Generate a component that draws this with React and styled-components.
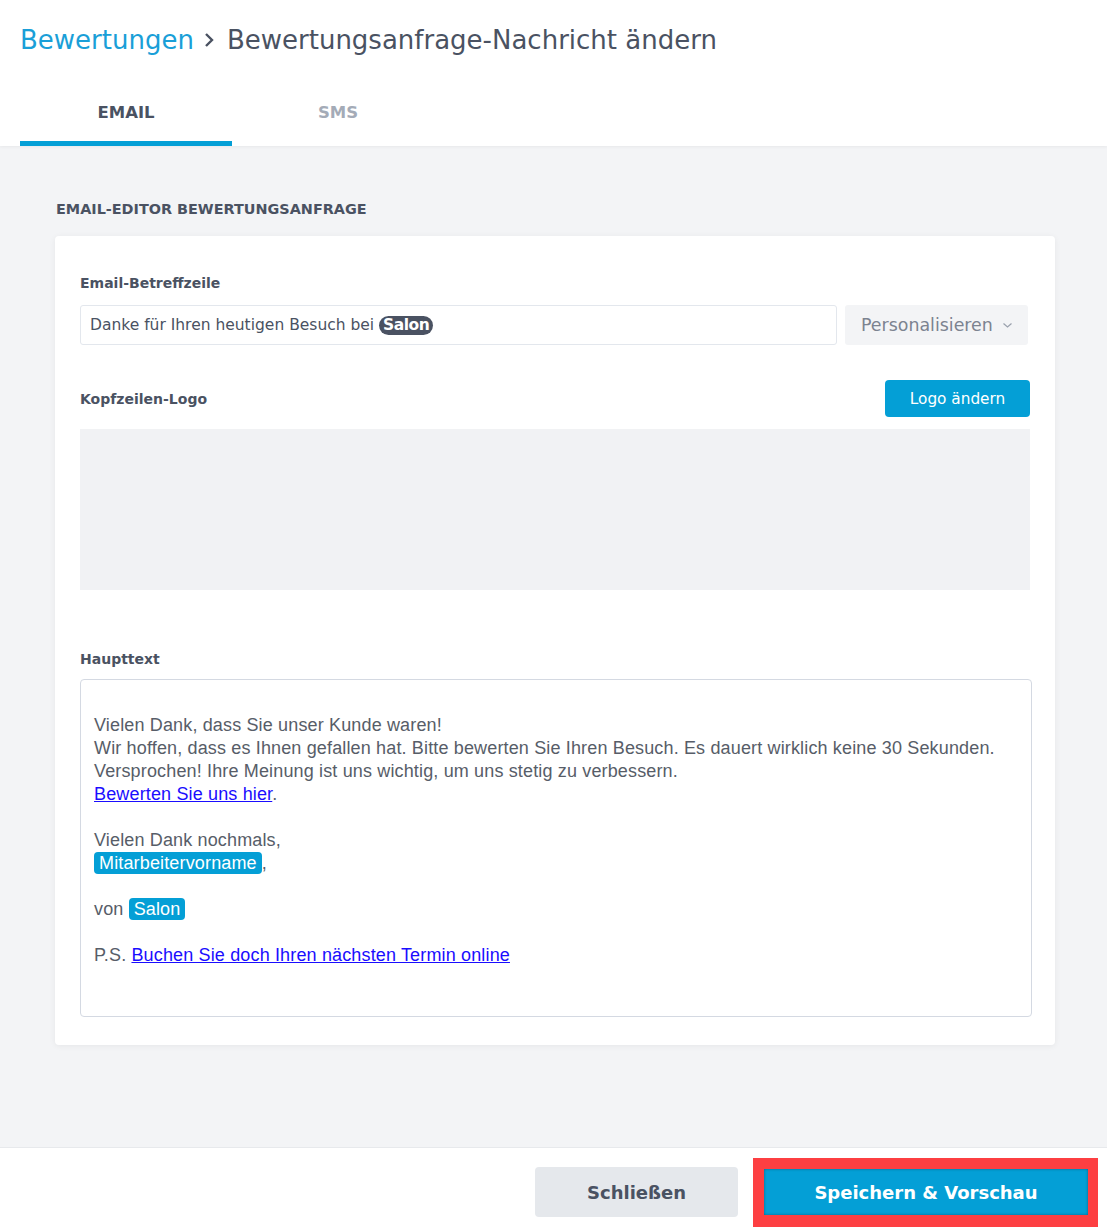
import React from 'react';
import styled, { createGlobalStyle } from 'styled-components';

const GlobalStyle = createGlobalStyle`
  html, body {
    margin: 0;
    padding: 0;
    background: #f3f4f6;
  }
  body {
    font-family: "DejaVu Sans", "Noto Sans", sans-serif;
    color: #4a5262;
  }
`;

function App() {
  return (
    <Page>
      <GlobalStyle />
      <Header>
        <Breadcrumb>
          <Crumb>Bewertungen</Crumb>
          <Chevron viewBox="0 0 12 16">
            <path d="M3 2 L9 8 L3 14" fill="none" stroke="#4a5262" strokeWidth="2.4" />
          </Chevron>
          <Current>Bewertungsanfrage-Nachricht ändern</Current>
        </Breadcrumb>
        <Tabs>
          <Tab active>EMAIL</Tab>
          <Tab>SMS</Tab>
        </Tabs>
      </Header>

      <Main>
        <SectionTitle>EMAIL-EDITOR BEWERTUNGSANFRAGE</SectionTitle>
        <Card>
          <Label>Email-Betreffzeile</Label>
          <SubjectRow>
            <SubjectInput>
              Danke für Ihren heutigen Besuch bei <DarkPill>Salon</DarkPill>
            </SubjectInput>
            <SelectButton>
              Personalisieren
              <svg width="11" height="10" viewBox="0 0 11 10">
                <path d="M1.5 3.5 L5.5 7 L9.5 3.5" fill="none" stroke="#9aa1ad" strokeWidth="1.2" />
              </svg>
            </SelectButton>
          </SubjectRow>

          <LabelRow>
            <Label>Kopfzeilen-Logo</Label>
            <PrimarySmall>Logo ändern</PrimarySmall>
          </LabelRow>
          <LogoArea />

          <Label $top={59}>Haupttext</Label>
          <Editor>
            <p>
              Vielen Dank, dass Sie unser Kunde waren!<br />
              Wir hoffen, dass es Ihnen gefallen hat. Bitte bewerten Sie Ihren Besuch. Es dauert wirklich keine 30 Sekunden.
              <br />
              Versprochen! Ihre Meinung ist uns wichtig, um uns stetig zu verbessern.<br />
              <Link>Bewerten Sie uns hier</Link>.
            </p>
            <p>
              Vielen Dank nochmals,<br />
              <Tag>Mitarbeitervorname</Tag>,
            </p>
            <p>
              von <Tag>Salon</Tag>
            </p>
            <p>
              P.S. <Link>Buchen Sie doch Ihren nächsten Termin online</Link>
            </p>
          </Editor>
        </Card>
      </Main>

      <Footer>
        <SecondaryButton>Schließen</SecondaryButton>
        <Highlight>
          <PrimaryButton>Speichern &amp; Vorschau</PrimaryButton>
        </Highlight>
      </Footer>
    </Page>
  );
}

const Page = styled.div`
  min-height: 1227px;
  display: flex;
  flex-direction: column;
  background: #f3f4f6;
`;

const Header = styled.header`
  background: #fff;
  padding: 22px 20px 0;
  box-shadow: 0 1px 3px rgba(0, 0, 0, 0.05);
  position: relative;
  z-index: 1;
`;

const Breadcrumb = styled.div`
  display: flex;
  align-items: center;
  font-size: 26px;
  line-height: 36px;
`;

const Crumb = styled.span`
  color: #1a9fd8;
`;

const Current = styled.span`
  color: #4a5262;
`;

const Chevron = styled.svg`
  width: 12px;
  height: 16px;
  margin: 0 12px 0 9px;
`;

const Tabs = styled.nav`
  display: flex;
  margin-top: 34px;
`;

const Tab = styled.div`
  width: 212px;
  height: 54px;
  box-sizing: border-box;
  text-align: center;
  font-size: 16.5px;
  font-weight: 700;
  padding-top: 11px;
  color: ${(p) => (p.active ? '#4a5262' : '#a4abb7')};
  border-bottom: 5px solid ${(p) => (p.active ? '#049fd6' : 'transparent')};
`;

const Main = styled.main`
  flex: 1;
  padding: 55px 52px 0 55px;
`;

const SectionTitle = styled.h2`
  margin: 0 0 19px 1px;
  font-size: 14.4px;
  font-weight: 700;
  color: #4a5262;
`;

const Card = styled.section`
  background: #fff;
  border-radius: 4px;
  box-shadow: 0 1px 6px rgba(0, 0, 0, 0.06);
  padding: 37px 25px 28px 25px;
`;

const Label = styled.div`
  margin-top: ${(p) => (p.$top ? `${p.$top}px` : '0')};
  font-size: 14px;
  font-weight: 700;
  color: #4a5262;
  line-height: 20px;
`;

const SubjectRow = styled.div`
  display: flex;
  gap: 8px;
  margin-top: 12px;
`;

const SubjectInput = styled.div`
  flex: 1;
  height: 40px;
  box-sizing: border-box;
  border: 1px solid #e3e7ed;
  border-radius: 3px;
  display: flex;
  align-items: center;
  padding: 0 9px;
  font-size: 15.5px;
  color: #4a5262;
  white-space: pre;
`;

const DarkPill = styled.span`
  background: #4a5262;
  color: #fff;
  font-weight: 700;
  border-radius: 10px;
  padding: 0 4px;
  line-height: 19px;
  letter-spacing: -0.5px;
`;

const SelectButton = styled.div`
  width: 183px;
  height: 40px;
  box-sizing: border-box;
  background: #f3f4f6;
  border-radius: 3px;
  display: flex;
  align-items: center;
  padding-left: 16px;
  gap: 9px;
  font-size: 17.4px;
  color: #7c8390;
  margin-right: 2px;
`;

const LabelRow = styled.div`
  display: flex;
  align-items: center;
  justify-content: space-between;
  margin-top: 35px;
`;

const PrimarySmall = styled.button`
  width: 145px;
  height: 37px;
  border: none;
  border-radius: 4px;
  background: #049fd6;
  color: #fff;
  font-family: inherit;
  font-size: 15.3px;
  cursor: pointer;
`;

const LogoArea = styled.div`
  height: 161px;
  margin-top: 12px;
  background: #f1f2f4;
`;

const Editor = styled.div`
  margin-top: 10px;
  margin-right: -2px;
  border: 1px solid #d4d9e2;
  border-radius: 4px;
  min-height: 338px;
  box-sizing: border-box;
  padding: 34px 13px 20px;
  font-family: "Liberation Sans", Arial, sans-serif;
  font-size: 18px;
  line-height: 23px;
  letter-spacing: 0.15px;
  color: #575d68;

  p {
    margin: 0 0 23px;
  }
  p:last-child {
    margin-bottom: 0;
  }
`;

const Link = styled.a`
  color: #1a0dff;
  text-decoration: underline;
  cursor: pointer;
`;

const Tag = styled.span`
  background: #049fd6;
  color: #fff;
  border-radius: 4px;
  padding: 1px 5px;
`;

const Footer = styled.footer`
  height: 80px;
  box-sizing: border-box;
  background: #fff;
  border-top: 1px solid #e7e9ec;
  display: flex;
  align-items: flex-end;
  justify-content: flex-end;
  gap: 15px;
  padding-right: 9px;
`;

const SecondaryButton = styled.button`
  width: 203px;
  height: 50px;
  margin-bottom: 10px;
  border: none;
  border-radius: 4px;
  background: #e5e8ec;
  color: #4a5262;
  font-family: inherit;
  font-size: 18px;
  font-weight: 600;
`;

const Highlight = styled.div`
  width: 345px;
  height: 69px;
  box-sizing: border-box;
  border: 11px solid #fd3f42;
  border-bottom-width: 12px;
  border-right-width: 10px;
  background: #fff;
`;

const PrimaryButton = styled.button`
  width: 100%;
  height: 100%;
  border: none;
  background: #049fd6;
  color: #fff;
  font-family: inherit;
  font-size: 18px;
  font-weight: 700;
  box-shadow: inset 0 0 3px rgba(0, 0, 0, 0.35);
`;

export default App;
